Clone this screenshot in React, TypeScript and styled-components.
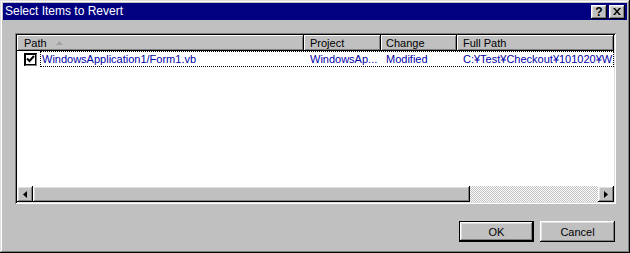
import React from "react";
import styled, { createGlobalStyle } from "styled-components";

const Global = createGlobalStyle`
  html, body { margin: 0; padding: 0; background: #c0c0c0; }
  body { font-family: "Liberation Sans", Arial, sans-serif; }
`;

const raised = `
  box-shadow: inset -1px -1px #000, inset 1px 1px #fff, inset -2px -2px #808080, inset 2px 2px #dfdfdf;
`;

const Window = styled.div`
  width: 630px;
  height: 253px;
  box-sizing: border-box;
  background: #c0c0c0;
  padding: 3px;
  display: flex;
  flex-direction: column;
  box-shadow: inset -1px -1px #000, inset 1px 1px #dfdfdf, inset -2px -2px #808080, inset 2px 2px #fff;
`;

const TitleBar = styled.div`
  height: 17px;
  background: #000080;
  display: flex;
  align-items: center;
  padding: 0 2px 0 2px;
  color: #fff;
  font-size: 12px;
`;

const TitleText = styled.div`
  flex: 1;
  line-height: 17px;
  white-space: nowrap;
`;

const TitleButtons = styled.div`
  display: flex;
  gap: 2px;
`;

const TitleButton = styled.div`
  width: 16px;
  height: 14px;
  background: #c0c0c0;
  ${raised}
  display: flex;
  align-items: center;
  justify-content: center;
  color: #000;
  font-weight: bold;
  font-size: 12px;
  line-height: 14px;
`;

const Content = styled.div`
  flex: 1;
  display: flex;
  flex-direction: column;
  padding: 13px 12px 0 12px;
`;

const ListView = styled.div`
  width: 601px;
  height: 171px;
  box-sizing: border-box;
  padding: 2px;
  background: #fff;
  box-shadow: inset 1px 1px #808080, inset -1px -1px #fff, inset 2px 2px #000, inset -2px -2px #dfdfdf;
  display: flex;
  flex-direction: column;
  overflow: hidden;
  font-size: 11px;
`;

const Header = styled.div`
  height: 16px;
  display: flex;
  background: #c0c0c0;
`;

const HeaderCell = styled.div<{ $w?: number; $pad: number }>`
  ${(p) => (p.$w ? `width: ${p.$w}px; flex: none;` : `flex: 1;`)}
  box-sizing: border-box;
  height: 16px;
  padding-left: ${(p) => p.$pad}px;
  display: flex;
  align-items: center;
  gap: 9px;
  color: #000;
  white-space: nowrap;
  box-shadow: inset -1px -1px #000, inset 1px 1px #fff, inset -2px -2px #808080;
`;

const Body = styled.div`
  flex: 1;
  background: #fff;
  overflow: hidden;
`;

const Row = styled.div`
  height: 16px;
  display: flex;
  align-items: center;
  color: #0000a8;
`;

const CheckBox = styled.div`
  width: 13px;
  height: 13px;
  box-sizing: border-box;
  margin-left: 7px;
  margin-right: 3px;
  background: #fff;
  box-shadow: inset 1px 1px #000, inset -1px -1px #808080, inset 2px 2px #000, inset -2px -2px #000;
  display: flex;
  align-items: center;
  justify-content: center;
`;

const FocusRow = styled.div`
  flex: 1;
  height: 16px;
  box-sizing: border-box;
  border: 1px dotted #000;
  display: flex;
  align-items: center;
  white-space: nowrap;
  overflow: hidden;
`;

const Cell = styled.div<{ $w?: number; $pad: number }>`
  ${(p) => (p.$w ? `width: ${p.$w}px; flex: none;` : `flex: 1;`)}
  box-sizing: border-box;
  padding-left: ${(p) => p.$pad}px;
  overflow: hidden;
  white-space: nowrap;
`;

const ScrollBar = styled.div`
  height: 16px;
  display: flex;
  background-color: #fff;
  background-image: repeating-conic-gradient(#c0c0c0 0 25%, #fff 0 50%);
  background-size: 2px 2px;
`;

const ArrowButton = styled.div`
  width: 16px;
  height: 16px;
  flex: none;
  background: #c0c0c0;
  ${raised}
  display: flex;
  align-items: center;
  justify-content: center;
`;

const Thumb = styled.div<{ $w: number }>`
  width: ${(p) => p.$w}px;
  height: 16px;
  flex: none;
  background: #c0c0c0;
  ${raised}
`;

const Track = styled.div`
  flex: 1;
`;

const Footer = styled.div`
  display: flex;
  justify-content: flex-end;
  gap: 6px;
  margin-top: 17px;
`;

const Button = styled.div<{ $default?: boolean }>`
  width: 75px;
  height: 21px;
  box-sizing: border-box;
  background: #c0c0c0;
  display: flex;
  align-items: center;
  justify-content: center;
  font-size: 11px;
  color: #000;
  ${(p) =>
    p.$default
      ? `border: 1px solid #000; box-shadow: inset -1px -1px #000, inset 1px 1px #fff, inset -2px -2px #808080, inset 2px 2px #dfdfdf;`
      : raised}
`;

const Tri = ({ dir }: { dir: "left" | "right" }) => (
  <svg width="4" height="7" viewBox="0 0 4 7">
    {dir === "left" ? (
      <path d="M4 0 L0 3.5 L4 7 Z" fill="#000" />
    ) : (
      <path d="M0 0 L4 3.5 L0 7 Z" fill="#000" />
    )}
  </svg>
);

export default function App() {
  return (
    <>
      <Global />
      <Window>
        <TitleBar>
          <TitleText>Select Items to Revert</TitleText>
          <TitleButtons>
            <TitleButton>?</TitleButton>
            <TitleButton>
              <svg width="8" height="7" viewBox="0 0 8 7">
                <path d="M0 0h2l2 2.5L6 0h2L5 3.5 8 7H6L4 4.5 2 7H0l3-3.5z" fill="#000" />
              </svg>
            </TitleButton>
          </TitleButtons>
        </TitleBar>
        <Content>
          <ListView>
            <Header>
              <HeaderCell $w={287} $pad={7}>
                Path
                <svg width="7" height="4" viewBox="0 0 7 4">
                  <path d="M3.5 0 L7 4 L0 4 Z" fill="#a0a0a0" />
                </svg>
              </HeaderCell>
              <HeaderCell $w={77} $pad={6}>Project</HeaderCell>
              <HeaderCell $w={76} $pad={5}>Change</HeaderCell>
              <HeaderCell $pad={6}>Full Path</HeaderCell>
            </Header>
            <Body>
              <Row>
                <CheckBox>
                  <svg width="9" height="8" viewBox="0 0 9 8">
                    <path d="M1 3.5 L3.5 6 L8 1" stroke="#000" strokeWidth="2" fill="none" />
                  </svg>
                </CheckBox>
                <FocusRow>
                  <Cell $w={263} $pad={1}>WindowsApplication1/Form1.vb</Cell>
                  <Cell $w={77} $pad={6}>WindowsAp...</Cell>
                  <Cell $w={76} $pad={5}>Modified</Cell>
                  <Cell $pad={6}>C:¥Test¥Checkout¥101020¥W</Cell>
                </FocusRow>
              </Row>
            </Body>
            <ScrollBar>
              <ArrowButton>
                <Tri dir="left" />
              </ArrowButton>
              <Thumb $w={437} />
              <Track />
              <ArrowButton>
                <Tri dir="right" />
              </ArrowButton>
            </ScrollBar>
          </ListView>
          <Footer>
            <Button $default>OK</Button>
            <Button>Cancel</Button>
          </Footer>
        </Content>
      </Window>
    </>
  );
}
